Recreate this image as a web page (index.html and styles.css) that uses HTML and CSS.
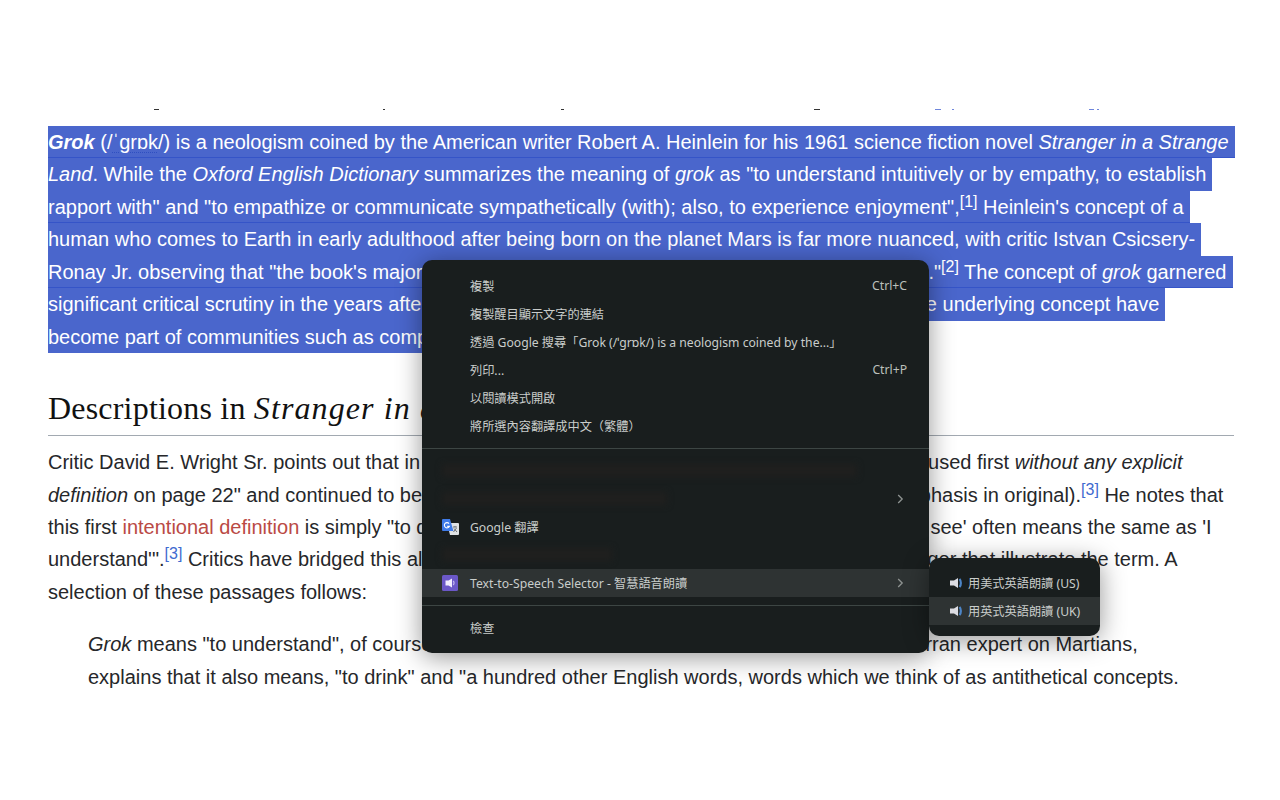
FILE: index.html
```html
<!DOCTYPE html>
<html lang="zh-Hant">
<head>
<meta charset="utf-8">
<title>Grok</title>
<link rel="stylesheet" href="styles.css">
</head>
<body>
<main class="page">
  <svg class="clip-marks" width="1280" height="2" viewBox="0 0 1280 2" aria-hidden="true">
    <g fill="#333"><rect x="154" width="5" height="1"/><rect x="383" width="2" height="1"/><rect x="561" width="3" height="1"/><rect x="814" width="6" height="1"/></g>
    <g fill="#6f86dc"><rect x="935" width="6" height="1"/><rect x="952" width="2" height="1"/><rect x="1089" width="5" height="1"/><rect x="1097" width="2" height="1"/></g>
  </svg>
  <p class="lead">
    <span class="ln sel seam"><b><i>Grok</i></b> (/<span class="ipa">ˈɡrɒk</span>/) is a neologism coined by the American writer Robert A. Heinlein for his 1961 science fiction novel <i>Stranger in a Strange</i></span>
    <span class="ln sel"><i>Land</i>. While the <i>Oxford English Dictionary</i> summarizes the meaning of <i>grok</i> as "to understand intuitively or by empathy, to establish</span>
    <span class="ln sel seam">rapport with" and "to empathize or communicate sympathetically (with); also, to experience enjoyment",<sup>[1]</sup> Heinlein's concept of a</span>
    <span class="ln sel">human who comes to Earth in early adulthood after being born on the planet Mars is far more nuanced, with critic Istvan Csicsery-</span>
    <span class="ln sel seam">Ronay Jr. observing that "the book's major<span class="gap g1"></span>."<sup>[2]</sup> The concept of <i>grok</i> garnered</span>
    <span class="ln sel">significant critical scrutiny in the years after<span class="gap g2"></span>the underlying concept have</span>
    <span class="ln sel">become part of communities such as computer<span class="gap g3"></span></span>
  </p>
  <h2 class="heading">Descriptions in <i>Stranger in a</i></h2>
  <p class="body-copy">
    <span class="ln">Critic David E. Wright Sr. points out that in<span class="gap g4"></span>used first <i>without any explicit</i></span>
    <span class="ln"><i>definition</i> on page 22" and continued to be<span class="gap g5"></span>emphasis in original).<sup class="ref">[3]</sup> He notes that</span>
    <span class="ln">this first <span class="redlink">intentional definition</span> is simply "to d<span class="gap g6"></span>see' often means the same as 'I</span>
    <span class="ln">understand'".<sup class="ref">[3]</sup> Critics have bridged this al<span class="gap g7"></span>ger that illustrate the term. A</span>
    <span class="ln">selection of these passages follows:</span>
  </p>
  <blockquote class="quote">
    <span class="ln"><i>Grok</i> means "to understand", of course<span class="gap g8"></span>rran expert on Martians,</span>
    <span class="ln">explains that it also means, "to drink" and "a hundred other English words, words which we think of as antithetical concepts.</span>
  </blockquote>
</main>

<nav class="menu">
  <div class="row"><span>複製</span><span class="key">Ctrl+C</span></div>
  <div class="row"><span>複製醒目顯示文字的連結</span></div>
  <div class="row"><span>透過 Google 搜尋「Grok (/ˈɡrɒk/) is a neologism coined by the...」</span></div>
  <div class="row"><span>列印...</span><span class="key">Ctrl+P</span></div>
  <div class="row"><span>以閱讀模式開啟</span></div>
  <div class="row"><span>將所選內容翻譯成中文（繁體）</span></div>
  <div class="sep"></div>
  <div class="row smudged"><span class="smudge s1"></span></div>
  <div class="row smudged"><span class="smudge s2"></span>
    <svg class="chev" width="7" height="10" viewBox="0 0 7 10"><path d="M1.2 1 5.2 5 1.2 9" fill="none" stroke="#8f9492" stroke-width="1.3"/></svg></div>
  <div class="row has-icon">
    <svg class="ico" width="17" height="17" viewBox="0 0 17 17">
      <path d="M5 4h11a1 1 0 0 1 1 1v10a1 1 0 0 1-1 1H8z" fill="#dfe2e4"/>
      <path d="M11 8h4M13 7v1M11.5 13l3-4M12 9.5l3 3.5" stroke="#6c7074" stroke-width="1" fill="none"/>
      <path d="M1 0h7l3.4 12H1a1 1 0 0 1-1-1V1a1 1 0 0 1 1-1z" fill="#3f7be8"/>
      <path d="M7 4.6A2.6 2.6 0 1 0 7.3 7.4H5.2" fill="none" stroke="#fff" stroke-width="1.1"/>
    </svg>
    <span>Google 翻譯</span></div>
  <div class="row smudged"><span class="smudge s3"></span></div>
  <div class="row has-icon hover">
    <svg class="ico" width="16" height="16" viewBox="0 0 16 16">
      <rect width="16" height="16" rx="1.5" fill="#6b58c8"/>
      <path d="M3.5 5.5h3L10 3.5v9l-3.500-2h-3z" fill="#f1edff"/>
      <path d="M11.200 6a2.800 2.800 0 0 1 0 4" fill="none" stroke="#c3b9ee" stroke-width="1.200"/>
    </svg>
    <span>Text-to-Speech Selector - 智慧語音朗讀</span>
    <svg class="chev" width="7" height="10" viewBox="0 0 7 10"><path d="M1.2 1 5.2 5 1.2 9" fill="none" stroke="#8f9492" stroke-width="1.3"/></svg></div>
  <div class="sep"></div>
  <div class="row"><span>檢查</span></div>
</nav>

<nav class="submenu">
  <div class="subrow">
    <svg class="spk" width="13" height="12" viewBox="0 0 13 12"><path d="M0 3.500h4L8 1v10L4 8.500H0z" fill="#dcdce2"/><path d="M9.500 2c1.800 1.800 1.800 6.200 0 8" fill="none" stroke="#4d86c8" stroke-width="2.200"/></svg>
    <span>用美式英語朗讀 (US)</span></div>
  <div class="subrow hover">
    <svg class="spk" width="13" height="12" viewBox="0 0 13 12"><path d="M0 3.500h4L8 1v10L4 8.500H0z" fill="#dcdce2"/><path d="M9.500 2c1.800 1.800 1.800 6.200 0 8" fill="none" stroke="#4d86c8" stroke-width="2.200"/></svg>
    <span>用英式英語朗讀 (UK)</span></div>
</nav>
</body>
</html>
```
FILE: styles.css
```css
html, body { margin: 0; padding: 0; background: #fff; }
body { width: 1280px; height: 800px; overflow: hidden; font-family: "Liberation Sans", Arial, sans-serif; color: #26272a; }
.page { padding: 109px 46px 0 48px; font-size: 20px; line-height: 32.45px; }
.clip-marks { display: block; margin: 0 0 0 -48px; }
.ln { display: block; white-space: nowrap; width: fit-content; }
p, blockquote { margin: 0; }
.lead { margin-top: 15px; color: #fff; }
.sel { background: #4a66cc; padding-right: 6px; height: 32.45px; }
.seam { box-shadow: inset 0 -1px 0 #3554c8; }
.ipa { text-decoration: underline dotted 1px #2f4fc0; text-underline-offset: 3px; }
sup { font-size: 16px; line-height: 0; vertical-align: baseline; position: relative; top: -7px; }
.ref { color: #3f6bd0; }
.redlink { color: #ba4a45; }
.gap { display: inline-block; height: 1px; }
.g1 { width: 506px; }
.g2 { width: 481px; }
.g3 { width: 200px; }
.g4 { width: 508px; }
.g5 { width: 470px; }
.g6 { width: 503px; }
.g7 { width: 505px; }
.g8 { width: 493px; }
.heading { margin: 30px 0 0; padding-bottom: 2px; border-bottom: 1px solid #a2a9b1; font: 400 32px/50px "Liberation Serif", serif; letter-spacing: .2px; color: #111; white-space: nowrap; }
.heading i { letter-spacing: 1.1px; }
.body-copy { margin-top: 10px; }
.quote { margin: 20px 0 0 40px; }

.menu, .submenu { position: absolute; background: #191e1e; color: #c9cdcb; font-family: "Noto Sans", "Noto Sans CJK TC", sans-serif; font-size: 12.2px; box-shadow: 0 4px 26px rgba(0,0,0,.42); }
.menu { left: 422px; top: 260px; width: 507px; height: 393px; padding: 12px 0 11px; box-sizing: border-box; border-radius: 10px; }
.row { height: 28px; display: flex; align-items: center; justify-content: space-between; padding: 0 22px 1px 48px; box-sizing: border-box; position: relative; }
.key { color: #bcc0bc; }
.hover { background: #2e3333; }
.sep { height: 1px; background: #3d4644; margin: 8px 0; }
.smudged { padding-left: 20px; }
.smudge { display: block; height: 13px; background: #1f1f1e; filter: blur(3px); }
.s1 { width: 415px; }
.s2 { width: 225px; }
.s3 { width: 170px; }
.chev { position: absolute; right: 25px; top: 9px; }
.has-icon { justify-content: flex-start; }
.ico { position: absolute; left: 20px; top: 6px; }
.submenu { left: 929px; top: 558px; width: 171px; height: 78px; padding: 11px 0; box-sizing: border-box; border-radius: 10px; }
.subrow { height: 28px; display: flex; align-items: center; gap: 5px; padding: 0 0 1px 21px; box-sizing: border-box; }
.spk { flex: none; }
```
